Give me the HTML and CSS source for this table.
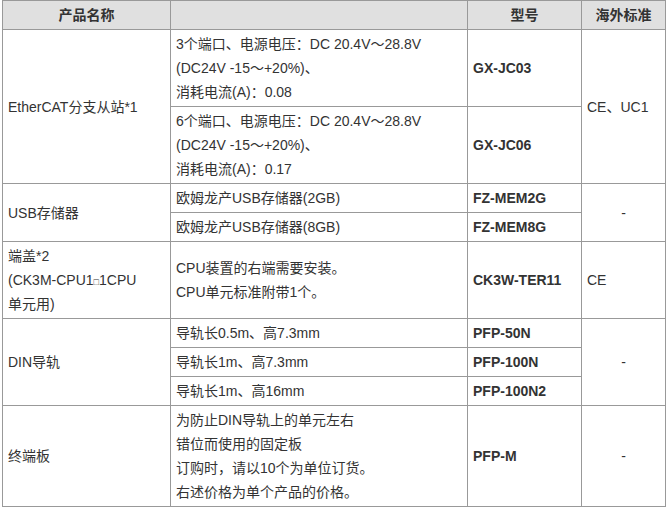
FILE: index.html
```html
<!DOCTYPE html>
<html lang="zh-CN">
<head>
<meta charset="utf-8">
<title>产品列表</title>
<link rel="stylesheet" href="styles.css">
</head>
<body>
<table class="spec">
  <colgroup>
    <col class="c-name">
    <col class="c-desc">
    <col class="c-model">
    <col class="c-std">
  </colgroup>
  <thead>
    <tr>
      <th><div class="ln">产品名称</div></th>
      <th><div class="ln"></div></th>
      <th><div class="ln">型号</div></th>
      <th><div class="ln">海外标准</div></th>
    </tr>
  </thead>
  <tbody>
    <tr>
      <td rowspan="2"><div class="ln">EtherCAT分支从站*1</div></td>
      <td>
        <div class="ln">3个端口、电源电压：DC 20.4V～28.8V</div>
        <div class="ln">(DC24V -15～+20%)、</div>
        <div class="ln">消耗电流(A)：0.08</div>
      </td>
      <td class="model"><div class="ln">GX-JC03</div></td>
      <td rowspan="2"><div class="ln">CE、UC1</div></td>
    </tr>
    <tr>
      <td>
        <div class="ln">6个端口、电源电压：DC 20.4V～28.8V</div>
        <div class="ln">(DC24V -15～+20%)、</div>
        <div class="ln">消耗电流(A)：0.17</div>
      </td>
      <td class="model"><div class="ln">GX-JC06</div></td>
    </tr>
    <tr>
      <td rowspan="2"><div class="ln">USB存储器</div></td>
      <td><div class="ln">欧姆龙产USB存储器(2GB)</div></td>
      <td class="model"><div class="ln">FZ-MEM2G</div></td>
      <td rowspan="2" class="center"><div class="ln">-</div></td>
    </tr>
    <tr>
      <td><div class="ln">欧姆龙产USB存储器(8GB)</div></td>
      <td class="model"><div class="ln">FZ-MEM8G</div></td>
    </tr>
    <tr>
      <td>
        <div class="ln">端盖*2</div>
        <div class="ln">(CK3M-CPU1<span class="box">□</span>1CPU</div>
        <div class="ln">单元用)</div>
      </td>
      <td>
        <div class="ln">CPU装置的右端需要安装。</div>
        <div class="ln">CPU单元标准附带1个。</div>
      </td>
      <td class="model"><div class="ln">CK3W-TER11</div></td>
      <td><div class="ln">CE</div></td>
    </tr>
    <tr>
      <td rowspan="3"><div class="ln">DIN导轨</div></td>
      <td><div class="ln">导轨长0.5m、高7.3mm</div></td>
      <td class="model"><div class="ln">PFP-50N</div></td>
      <td rowspan="3" class="center"><div class="ln">-</div></td>
    </tr>
    <tr>
      <td><div class="ln">导轨长1m、高7.3mm</div></td>
      <td class="model"><div class="ln">PFP-100N</div></td>
    </tr>
    <tr>
      <td><div class="ln">导轨长1m、高16mm</div></td>
      <td class="model"><div class="ln">PFP-100N2</div></td>
    </tr>
    <tr>
      <td><div class="ln">终端板</div></td>
      <td>
        <div class="ln">为防止DIN导轨上的单元左右</div>
        <div class="ln">错位而使用的固定板</div>
        <div class="ln">订购时，请以10个为单位订货。</div>
        <div class="ln">右述价格为单个产品的价格。</div>
      </td>
      <td class="model"><div class="ln">PFP-M</div></td>
      <td class="center"><div class="ln">-</div></td>
    </tr>
  </tbody>
</table>
</body>
</html>
```

FILE: styles.css
```css
html, body {
  margin: 0;
  padding: 0;
  background: #fff;
}

.spec {
  margin-left: 2px;
  width: 663px;
  table-layout: fixed;
  border-collapse: collapse;
  font-family: "Liberation Sans", "Noto Sans CJK SC", sans-serif;
  font-size: 14px;
  color: #333;
}

.c-name { width: 168px; }
.c-desc { width: 297px; }
.c-model { width: 114px; }
.c-std { width: 84px; }

.spec th,
.spec td {
  border: 1px solid #999;
  padding: 2px 5px;
  vertical-align: middle;
  text-align: left;
  white-space: nowrap;
}

.ln {
  height: 24px;
  line-height: 23px;
  padding-top: 1px;
  box-sizing: border-box;
  overflow: visible;
}

.spec th {
  background: #e0e0e0;
  font-weight: bold;
  text-align: center;
}

.spec td.model {
  font-weight: bold;
}

.spec td.center {
  text-align: center;
}

.box {
  font-size: 9px;
}
```
